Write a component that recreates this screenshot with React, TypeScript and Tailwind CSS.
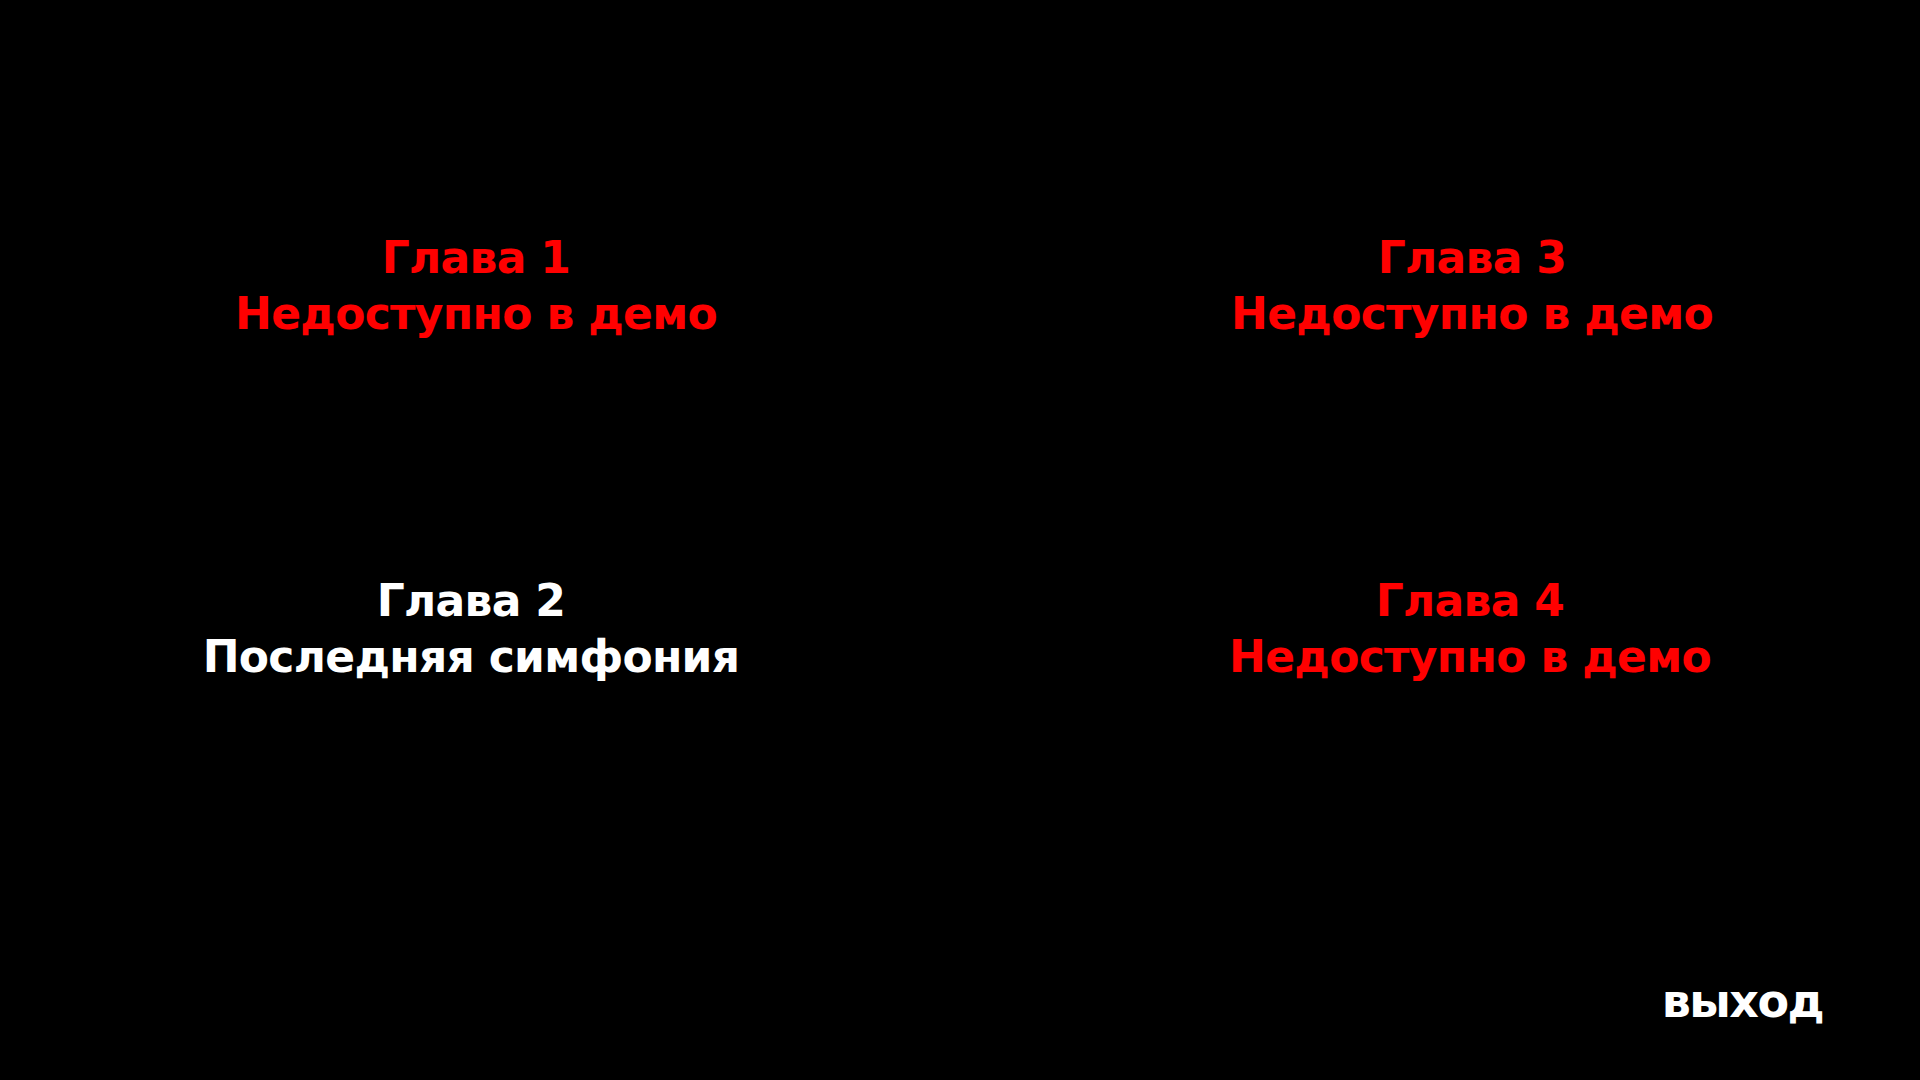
export default function App() {
  const font = { fontFamily: '"DejaVu Sans", Verdana, sans-serif' }
  return (
    <div className="w-[1920px] h-[1080px] bg-black relative overflow-hidden" style={font}>
      <div className="grid grid-cols-[700px_700px] gap-x-[296px] gap-y-[231px] pl-[126px] pt-[230px] text-[44px] leading-[56px] font-bold text-center tracking-[-0.7px]">
        <div className="text-[#ff0000]">
          <div>Глава 1</div>
          <div>Недоступно в демо</div>
        </div>
        <div className="text-[#ff0000]">
          <div>Глава 3</div>
          <div>Недоступно в демо</div>
        </div>
        <div className="text-white pr-[10px]">
          <div>Глава 2</div>
          <div>Последняя симфония</div>
        </div>
        <div className="text-[#ff0000] pr-[4px]">
          <div>Глава 4</div>
          <div>Недоступно в демо</div>
        </div>
      </div>
      <div className="absolute right-[97px] bottom-[56px] text-white font-bold text-[46px] leading-none tracking-[-1.6px]">
        выход
      </div>
    </div>
  )
}
